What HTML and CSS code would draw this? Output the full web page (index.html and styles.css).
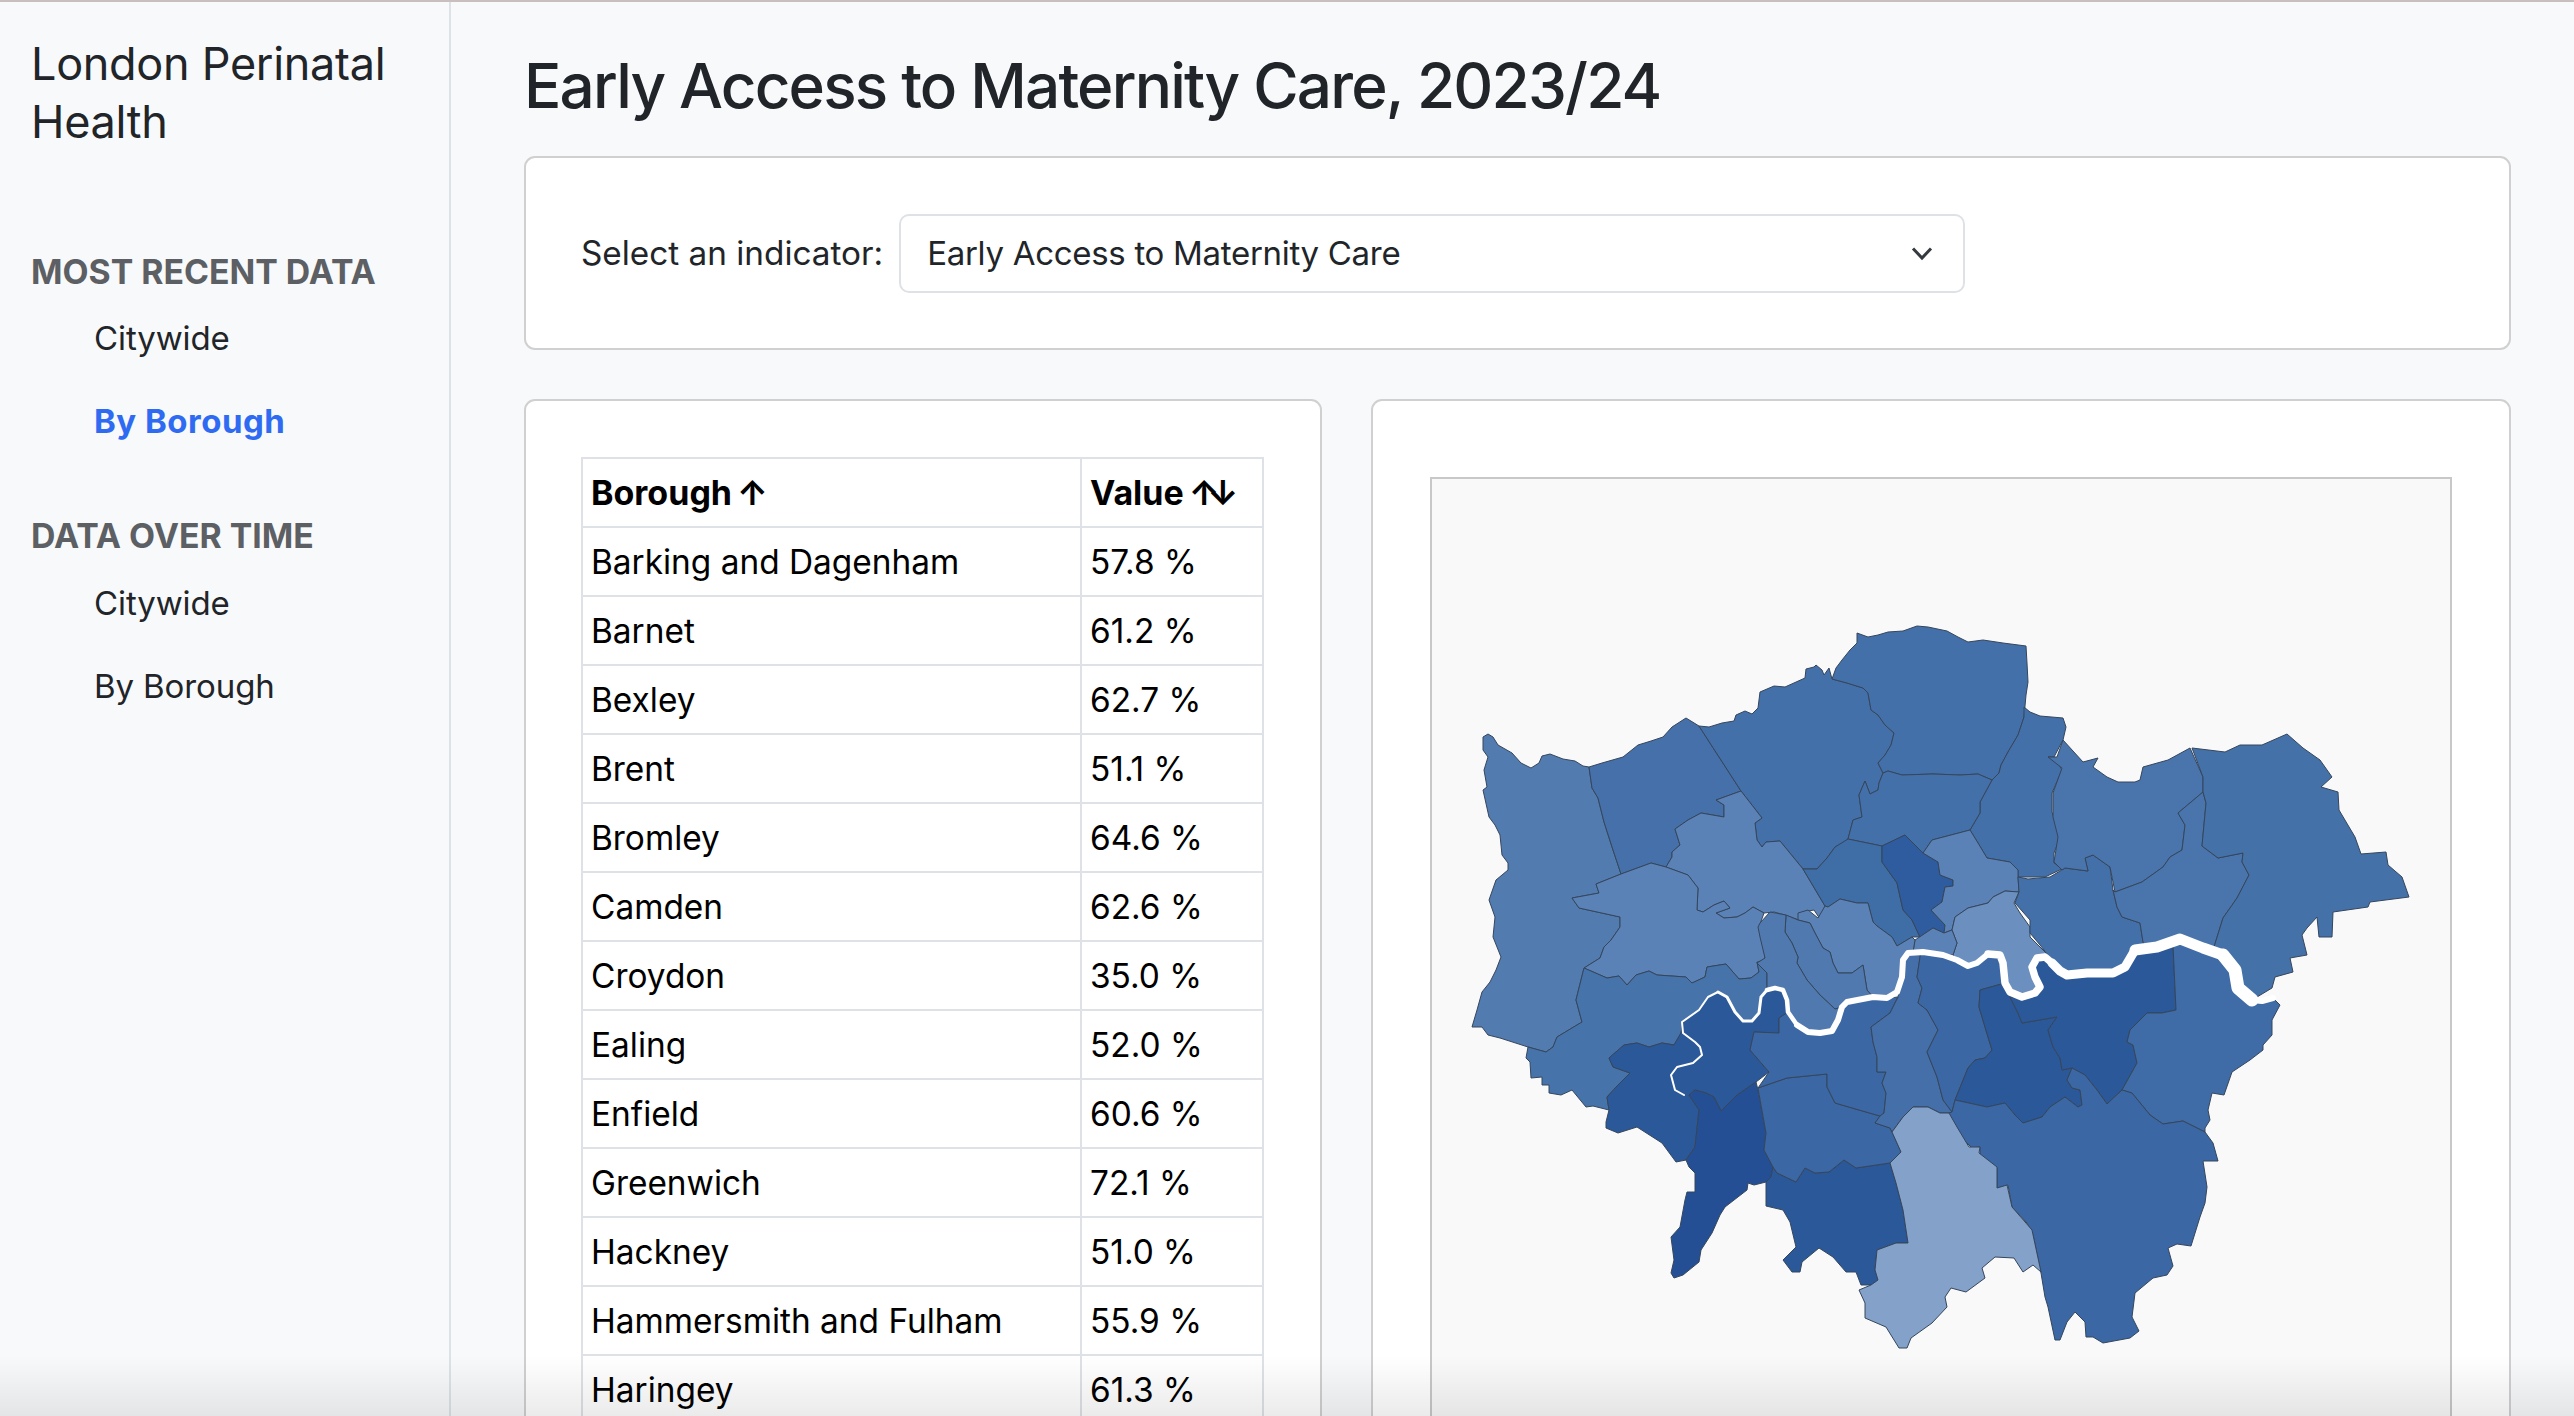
FILE: index.html
```html
<!DOCTYPE html>
<html lang="en">
<head>
<meta charset="utf-8">
<title>Early Access to Maternity Care</title>
<link rel="stylesheet" href="styles.css">
</head>
<body>
<div class="app">
<aside class="sidebar">
  <div class="brand">London Perinatal Health</div>
  <nav>
    <h3 class="nav-head">MOST RECENT DATA</h3>
    <a class="nav-link">Citywide</a>
    <a class="nav-link active">By Borough</a>
    <h3 class="nav-head second">DATA OVER TIME</h3>
    <a class="nav-link">Citywide</a>
    <a class="nav-link">By Borough</a>
  </nav>
</aside>
<main class="main">
  <h1 class="page-title">Early Access to Maternity Care, 2023/24</h1>
  <section class="card picker">
    <label class="picker-label">Select an indicator:</label>
    <div class="select">
      <span>Early Access to Maternity Care</span>
      <svg class="chevron" viewBox="0 0 24 24" width="24" height="24"><path d="M3 7.5 12 17 21 7.5" fill="none" stroke="#343a40" stroke-width="3"/></svg>
    </div>
  </section>
  <div class="columns">
    <section class="card table-card">
      <table class="data">
        <thead><tr><th>Borough <span class="arrow">↑</span></th><th>Value <span class="arrow">↑↓</span></th></tr></thead>
        <tbody>
          <tr><td>Barking and Dagenham</td><td>57.8 %</td></tr>
          <tr><td>Barnet</td><td>61.2 %</td></tr>
          <tr><td>Bexley</td><td>62.7 %</td></tr>
          <tr><td>Brent</td><td>51.1 %</td></tr>
          <tr><td>Bromley</td><td>64.6 %</td></tr>
          <tr><td>Camden</td><td>62.6 %</td></tr>
          <tr><td>Croydon</td><td>35.0 %</td></tr>
          <tr><td>Ealing</td><td>52.0 %</td></tr>
          <tr><td>Enfield</td><td>60.6 %</td></tr>
          <tr><td>Greenwich</td><td>72.1 %</td></tr>
          <tr><td>Hackney</td><td>51.0 %</td></tr>
          <tr><td>Hammersmith and Fulham</td><td>55.9 %</td></tr>
          <tr><td>Haringey</td><td>61.3 %</td></tr>
        </tbody>
      </table>
    </section>
    <section class="card map-card">
      <div class="map-box">
        <svg class="map" viewBox="1432 479 1017 960" width="1017" height="960">
          <g class="boroughs">
            <polygon class="c-hil" points="1483,737 1488,734 1493,737 1498,745 1512,753 1521,763 1531,768 1539,763 1542,756 1550,754 1563,759 1575,761 1583,766 1589,767 1592,788 1598,798 1604,822 1613,850 1621,874 1596,884 1599,893 1572,898 1579,908 1620,917 1620,927 1611,940 1604,947 1600,958 1584,968 1576,1000 1582,1022 1557,1037 1553,1047 1546,1052 1528,1047 1500,1038 1488,1035 1482,1027 1472,1027 1477,1010 1482,992 1490,982 1496,970 1501,957 1493,937 1495,917 1489,900 1496,880 1508,870 1508,863 1502,855 1500,835 1495,825 1489,817 1483,790 1487,787 1484,770 1488,757 1483,750"/>
            <polygon class="c-har" points="1589,767 1602,763 1623,757 1638,745 1651,741 1663,737 1672,727 1686,718 1699,726 1741,791 1716,800 1724,805 1724,817 1701,813 1688,820 1675,829 1680,845 1672,852 1672,857 1666,867 1651,863 1621,874 1613,850 1604,822 1598,798 1592,788"/>
            <polygon class="c-bar" points="1699,726 1709,727 1722,723 1734,721 1736,715 1745,711 1752,714 1758,708 1760,692 1774,686 1785,687 1805,678 1806,669 1814,667 1816,665 1822,670 1824,675 1829,668 1832,679 1847,683 1863,688 1868,693 1871,710 1878,715 1885,725 1894,733 1891,745 1885,755 1878,763 1883,773 1879,783 1878,790 1870,794 1865,781 1859,795 1862,817 1853,820 1848,839 1843,843 1835,847 1827,858 1817,869 1803,869 1780,841 1766,842 1762,847 1757,840 1755,823 1762,818 1741,791"/>
            <polygon class="c-bar" points="1832,679 1836,668 1842,660 1850,650 1857,643 1857,633 1868,637 1878,635 1888,632 1903,631 1917,626 1928,627 1947,631 1958,637 1968,642 1983,640 2003,643 2026,646 2027,663 2028,682 2026,695 2024,717 2018,735 2008,752 2001,765 1999,773 1992,780 1978,774 1960,775 1933,774 1902,775 1888,771 1883,773 1878,763 1885,755 1891,745 1894,733 1885,725 1878,715 1871,710 1868,693 1863,688 1847,683"/>
            <polygon class="c-bar" points="2024,707 2030,712 2040,716 2063,718 2066,727 2063,740 2054,757 2048,757 2058,763 2062,770 2052,793 2052,812 2057,828 2059,840 2054,853 2054,863 2062,869 2045,877 2018,877 2018,870 2010,862 1987,858 1978,843 1970,830 1980,813 1980,802 1992,780 1999,773 2001,765 2008,752 2018,735 2024,717"/>
            <polygon class="c-bar" points="1883,773 1888,771 1902,775 1933,774 1960,775 1978,774 1992,780 1980,802 1980,813 1970,830 1932,840 1923,853 1905,835 1882,846 1848,839 1853,820 1862,817 1859,795 1865,781 1870,794 1878,790 1879,783"/>
            <polygon class="c-bre" points="1741,791 1762,818 1755,823 1757,840 1762,847 1766,842 1780,841 1803,869 1825,906 1820,919 1814,910 1803,912 1799,915 1799,920 1785,915 1774,912 1764,913 1753,907 1745,913 1737,917 1724,918 1716,913 1730,908 1724,901 1714,905 1703,912 1697,910 1698,888 1688,875 1666,867 1672,857 1672,852 1680,845 1675,829 1688,820 1701,813 1724,817 1724,805 1716,800"/>
            <polygon class="c-bre" points="1621,874 1651,863 1666,867 1688,875 1698,888 1697,910 1703,912 1714,905 1724,901 1730,908 1716,913 1724,918 1737,917 1745,913 1753,907 1764,913 1759,927 1764,947 1765,960 1757,962 1759,972 1751,978 1739,979 1726,964 1707,967 1705,977 1692,983 1686,977 1657,975 1649,971 1636,975 1627,985 1619,976 1607,978 1584,968 1600,958 1604,947 1611,940 1620,927 1620,917 1579,908 1572,898 1599,893 1596,884"/>
            <polygon class="c-hou" points="1584,968 1607,978 1619,976 1627,985 1636,975 1649,971 1657,975 1686,977 1692,983 1705,977 1707,967 1726,964 1739,979 1751,978 1759,972 1757,962 1767,973 1767,990 1761,997 1759,1013 1752,1021 1743,1021 1735,1012 1727,997 1718,992 1708,997 1699,1010 1683,1022 1681,1033 1674,1045 1662,1043 1649,1047 1637,1043 1624,1045 1609,1058 1613,1067 1630,1073 1618,1085 1607,1097 1609,1110 1593,1106 1586,1107 1572,1090 1561,1095 1549,1093 1549,1085 1542,1085 1542,1077 1531,1078 1530,1062 1526,1058 1528,1047 1546,1052 1553,1047 1557,1037 1582,1022 1576,1000"/>
            <polygon class="c-ric" points="1683,1022 1699,1010 1708,997 1718,992 1727,997 1735,1012 1743,1021 1752,1021 1759,1013 1761,997 1767,990 1775,988 1783,990 1787,1000 1789,1018 1779,1018 1779,1033 1754,1032 1750,1050 1769,1072 1756,1082 1737,1095 1721,1111 1714,1097 1706,1093 1695,1090 1689,1095 1699,1110 1695,1147 1686,1160 1676,1162 1662,1143 1637,1127 1618,1133 1606,1128 1606,1122 1609,1110 1607,1097 1618,1085 1630,1073 1613,1067 1609,1058 1624,1045 1637,1043 1649,1047 1662,1043 1674,1045 1681,1033"/>
            <polygon class="c-kin" points="1689,1095 1695,1090 1706,1093 1714,1097 1721,1111 1737,1095 1756,1082 1758,1090 1766,1133 1764,1150 1773,1167 1771,1177 1766,1182 1754,1185 1748,1183 1747,1190 1725,1207 1720,1215 1712,1233 1701,1250 1699,1262 1683,1275 1674,1278 1671,1273 1674,1260 1671,1237 1680,1227 1685,1200 1687,1192 1695,1192 1695,1173 1689,1167 1686,1160 1695,1147 1699,1110"/>
            <polygon class="c-ric" points="1773,1167 1777,1173 1796,1182 1805,1168 1815,1173 1829,1172 1844,1160 1856,1168 1890,1163 1896,1183 1903,1210 1908,1243 1896,1243 1877,1250 1875,1270 1878,1280 1871,1285 1861,1285 1856,1272 1846,1272 1833,1257 1819,1248 1802,1262 1800,1272 1792,1272 1783,1260 1796,1247 1790,1222 1783,1210 1766,1206 1766,1182 1771,1177"/>
            <polygon class="c-wan" points="1758,1088 1787,1078 1827,1074 1827,1087 1835,1103 1859,1110 1880,1116 1875,1123 1890,1128 1892,1132 1901,1152 1890,1163 1856,1168 1844,1160 1829,1172 1815,1173 1805,1168 1796,1182 1777,1173 1773,1167 1764,1150 1766,1133"/>
            <polygon class="c-wan" points="1779,1033 1779,1018 1788,1012 1797,1025 1808,1032 1820,1033 1832,1031 1838,1020 1842,1007 1847,1002 1873,997 1887,998 1898,997 1890,1013 1871,1027 1873,1042 1877,1057 1877,1072 1886,1072 1882,1083 1886,1093 1884,1113 1880,1116 1859,1110 1835,1103 1827,1087 1827,1074 1787,1078 1758,1088 1769,1072 1750,1050 1754,1032"/>
            <polygon class="c-lam" points="1898,997 1902,977 1903,960 1908,953 1921,952 1920,957 1917,977 1922,988 1918,1003 1927,1010 1938,1030 1927,1052 1937,1077 1943,1100 1952,1112 1949,1113 1940,1113 1928,1107 1913,1107 1903,1117 1892,1132 1890,1128 1875,1123 1880,1116 1884,1113 1886,1093 1882,1083 1886,1072 1877,1072 1877,1057 1873,1042 1871,1027 1890,1013"/>
            <polygon class="c-wan" points="1921,952 1943,955 1957,960 1968,966 1977,963 1988,954 2000,955 2003,963 2005,983 1980,990 1979,1007 1988,1037 1992,1050 1985,1058 1975,1060 1968,1068 1955,1100 1952,1112 1943,1100 1937,1077 1927,1052 1938,1030 1927,1010 1918,1003 1922,988 1917,977 1920,957"/>
            <polygon class="c-ric" points="1980,990 2005,983 2010,992 2022,997 2010,997 2018,1013 2022,1023 2057,1017 2048,1030 2053,1047 2060,1058 2062,1070 2072,1068 2067,1080 2072,1088 2080,1090 2082,1105 2078,1107 2065,1097 2050,1107 2042,1117 2023,1123 2015,1115 2005,1103 1987,1107 1955,1100 1968,1068 1975,1060 1985,1058 1992,1050 1988,1037 1979,1007"/>
            <polygon class="c-ric" points="2022,997 2035,993 2040,987 2035,977 2032,967 2037,958 2045,957 2052,963 2060,973 2067,975 2087,973 2113,973 2125,967 2135,950 2157,947 2173,945 2176,1010 2162,1013 2147,1013 2130,1030 2127,1042 2133,1045 2137,1063 2132,1072 2122,1090 2107,1104 2097,1090 2085,1075 2072,1068 2062,1070 2060,1058 2053,1047 2048,1030 2057,1017 2022,1023 2018,1013 2010,997"/>
            <polygon class="c-bex" points="2173,945 2180,939 2203,948 2223,955 2235,970 2238,988 2252,1000 2273,998 2280,1005 2272,1020 2272,1035 2263,1045 2263,1050 2250,1060 2232,1072 2224,1095 2212,1093 2208,1110 2210,1120 2205,1128 2205,1132 2183,1121 2163,1124 2150,1115 2132,1093 2122,1090 2132,1072 2137,1063 2133,1045 2127,1042 2130,1030 2147,1013 2162,1013 2176,1010"/>
            <polygon class="c-bro" points="2122,1090 2132,1093 2150,1115 2163,1124 2183,1121 2205,1132 2213,1143 2218,1161 2203,1161 2207,1187 2205,1203 2200,1217 2191,1246 2177,1244 2168,1248 2173,1266 2167,1275 2153,1278 2135,1293 2132,1317 2139,1331 2130,1338 2103,1343 2093,1337 2086,1337 2085,1322 2075,1312 2067,1322 2060,1340 2055,1340 2048,1307 2045,1297 2041,1273 2033,1235 2027,1223 2012,1207 2008,1185 1997,1188 1997,1168 1980,1157 1980,1147 1972,1148 1957,1133 1949,1113 1952,1112 1955,1100 1987,1107 2005,1103 2015,1115 2023,1123 2042,1117 2050,1107 2065,1097 2078,1107 2082,1105 2080,1090 2072,1088 2067,1080 2072,1068 2085,1075 2097,1090 2107,1104"/>
            <polygon class="c-cro" points="1892,1132 1903,1117 1913,1107 1928,1107 1940,1113 1949,1113 1957,1127 1969,1147 1980,1147 1979,1153 1997,1167 1997,1188 2007,1185 2012,1207 2032,1230 2041,1272 2033,1265 2023,1272 2014,1258 1995,1257 1982,1268 1985,1278 1966,1292 1951,1288 1945,1297 1947,1307 1932,1323 1911,1338 1907,1348 1899,1348 1886,1327 1865,1318 1865,1303 1859,1290 1871,1285 1878,1280 1875,1270 1877,1250 1896,1243 1908,1243 1903,1210 1896,1183 1890,1163 1901,1152"/>
            <polygon class="c-cam" points="1803,869 1817,869 1827,858 1835,847 1848,839 1882,846 1882,862 1897,883 1903,910 1912,920 1920,937 1912,937 1897,946 1892,937 1877,926 1873,922 1868,903 1857,903 1840,899 1828,907 1825,906"/>
            <polygon class="c-isl" points="1882,846 1905,835 1923,853 1938,862 1940,875 1953,880 1953,886 1945,887 1942,902 1931,910 1945,925 1944,933 1933,928 1920,937 1912,920 1903,910 1897,883 1882,862"/>
            <polygon class="c-bre" points="1923,853 1932,840 1970,830 1978,843 1987,858 2010,862 2018,870 2018,877 2019,892 2005,891 1993,897 1988,903 1968,908 1955,917 1952,930 1944,933 1945,925 1931,910 1942,902 1945,887 1953,886 1953,880 1940,875 1938,862"/>
            <polygon class="c-tow" points="1955,917 1968,908 1988,903 1993,897 2005,891 2019,892 2014,903 2020,913 2030,927 2030,937 2038,945 2048,955 2045,957 2037,958 2032,967 2035,977 2040,987 2035,993 2022,997 2010,992 2005,983 2003,963 2000,955 1988,954 1977,963 1968,966 1957,960 1953,955 1957,943 1952,930"/>
            <polygon class="c-bre" points="1913,952 1915,940 1933,928 1944,933 1952,930 1957,943 1953,955 1943,955 1921,952"/>
            <polygon class="c-bre" points="1828,907 1840,899 1857,903 1868,903 1873,922 1877,926 1892,937 1897,946 1912,937 1915,940 1913,952 1908,953 1903,960 1902,977 1897,992 1887,998 1873,997 1867,990 1863,965 1852,973 1838,973 1833,963 1830,952 1823,948 1815,933 1810,923 1798,920 1798,913 1808,910 1818,918 1825,906"/>
            <polygon class="c-ken" points="1786,915 1798,920 1810,923 1815,933 1823,948 1830,952 1833,963 1838,973 1852,973 1863,965 1867,990 1873,997 1847,1002 1842,1007 1835,1009 1820,995 1807,980 1797,963 1798,957 1792,943 1785,932"/>
            <polygon class="c-ken" points="1760,923 1770,912 1786,915 1785,932 1792,943 1798,957 1797,963 1807,980 1820,995 1835,1009 1842,1007 1838,1020 1832,1031 1820,1033 1808,1032 1797,1025 1788,1012 1787,1000 1783,990 1775,988 1767,990 1767,973 1757,963 1765,958 1760,937 1758,927"/>
            <polygon class="c-bar" points="2018,877 2028,879 2050,877 2065,868 2088,871 2085,858 2093,855 2110,867 2113,890 2117,907 2122,917 2140,923 2143,942 2145,947 2135,950 2125,967 2113,973 2087,973 2067,975 2055,970 2045,957 2048,955 2040,945 2030,933 2030,920 2015,903 2019,892"/>
            <polygon class="c-red" points="2190,748 2168,760 2143,767 2140,780 2135,782 2118,782 2107,777 2093,767 2098,758 2083,762 2063,740 2057,757 2048,757 2062,768 2053,793 2053,817 2058,837 2054,862 2062,870 2065,868 2088,871 2085,858 2093,855 2110,867 2115,892 2142,882 2163,867 2170,857 2182,850 2185,825 2178,813 2203,792 2203,777"/>
            <polygon class="c-red" points="2203,792 2206,803 2202,846 2218,858 2243,853 2242,862 2249,875 2237,898 2223,918 2214,947 2203,948 2180,939 2157,947 2145,947 2143,942 2140,923 2122,917 2117,907 2113,890 2115,892 2142,882 2163,867 2170,857 2182,850 2185,825 2178,813"/>
            <polygon class="c-hav" points="2192,748 2225,752 2240,745 2262,745 2287,734 2303,748 2320,760 2332,777 2321,787 2338,792 2339,810 2355,837 2361,854 2386,852 2388,865 2402,877 2409,897 2370,902 2368,907 2333,912 2332,937 2319,937 2317,917 2307,928 2302,935 2307,955 2290,958 2293,972 2275,977 2272,988 2252,1000 2238,988 2235,970 2223,955 2214,947 2223,918 2237,898 2249,875 2242,862 2243,853 2218,858 2202,846 2206,803 2203,792 2203,777"/>
          </g>
          <g class="thames">
            <polyline class="r1" points="1684,1095 1675,1090 1671,1075 1677,1067 1693,1063 1702,1055 1700,1047 1695,1042 1683,1033 1682,1022 1699,1010 1708,997 1718,992"/>
            <polyline class="r2" points="1718,992 1727,997 1735,1012 1743,1021 1752,1021 1759,1013 1761,997 1767,990"/>
            <polyline class="r3" points="1767,990 1775,988 1783,990 1787,1000 1788,1012 1797,1025"/>
            <polyline class="r4" points="1797,1025 1808,1032 1820,1033 1832,1031 1838,1020 1842,1007 1847,1002 1873,997 1887,998 1897,992 1902,977 1903,960 1908,953 1923,952 1943,955 1957,960 1968,966 1977,963 1988,954"/>
            <polyline class="r5" points="1988,954 2000,955 2003,963 2005,983 2010,992 2022,997 2035,993 2040,987 2035,977 2032,967 2037,958 2045,957 2052,963"/>
            <polyline class="r6" points="2052,963 2060,971 2067,975 2087,973 2113,973 2125,967 2135,950"/>
            <polyline class="r7" points="2135,950 2157,947 2180,939 2203,948 2223,955"/>
            <polyline class="r8" points="2223,955 2235,970 2238,988 2252,1000"/>
            <polyline class="r4" points="2252,1000 2262,1001 2273,998"/>
          </g>
        </svg>
      </div>
    </section>
  </div>
</main>
</div>
<div class="bottom-fade"></div>
</body>
</html>
```
FILE: styles.css
```css
* { box-sizing: border-box; }
html, body { margin: 0; height: 100%; overflow: hidden; }
body {
  font-family: Inter, "Liberation Sans", sans-serif;
  color: #212529;
  background: #f8f9fa;
  border-top: 2px solid #cabfbf;
}
.app { display: flex; height: 1414px; overflow: hidden; }
.sidebar {
  flex: 0 0 451px;
  border-right: 2px solid #dee2e6;
  padding: 33px 31px 0;
}
.brand { font-size: 45px; line-height: 58px; margin-bottom: 99px; letter-spacing: -0.3px; }
.nav-head {
  margin: 0;
  font-size: 33.8px;
  line-height: 44px;
  font-weight: 700;
  color: #5c5f63;
}
.nav-head.second { margin-top: 71px; }
.nav-link {
  display: block;
  padding-left: 63px;
  font-size: 33px;
  line-height: 44px;
  margin: 0 0 39px;
  letter-spacing: -0.1px;
}
.nav-head + .nav-link { margin-top: 22px; }
.nav-head.second + .nav-link { margin-top: 23px; }
.nav-link.active { color: #2f6bf2; font-weight: 700; letter-spacing: 0.5px; }
.nav-link:last-child { margin-bottom: 0; }
.main { flex: 1; padding: 44px 63px 0 73px; min-width: 0; }
.page-title {
  margin: 0 0 30px;
  font-size: 62px;
  line-height: 80px;
  font-weight: 500;
  letter-spacing: -1.8px;
}
.card { background: #fff; border: 2px solid #d0d0d0; border-radius: 11px; }
.picker {
  display: flex;
  align-items: center;
  gap: 16px;
  padding: 55px;
  height: 194px;
}
.picker-label { font-size: 33.3px; color: #212529; }
.select {
  position: relative;
  display: flex;
  align-items: center;
  width: 1066px;
  height: 79px;
  padding: 0 26px;
  border: 2px solid #dee2e6;
  border-radius: 10px;
  font-size: 33px;
  letter-spacing: -0.3px;
}
.chevron { position: absolute; right: 29px; top: 25px; }
.columns {
  display: grid;
  grid-template-columns: 7fr 10fr;
  gap: 49px;
  margin-top: 49px;
  align-items: start;
}
.table-card { padding: 56px 56px 56px 55px; }
.data { border-collapse: collapse; width: 100%; color: #000; font-size: 33.4px; }
.data th, .data td {
  border: 2px solid #dee2e6;
  height: 69px;
  padding: 0 8px;
  text-align: left;
  line-height: 44px;
}
.data th { font-weight: 700; font-size: 34px; }
.data th:first-child, .data td:first-child { width: 499px; }
.arrow { letter-spacing: -12px; margin-left: -3px; }
.map-card { padding: 76px 57px 0; height: 1100px; }
.map-box {
  background: #f9f9f9;
  border: 2px solid #c8c8c8;
  height: 1000px;
}
.map { display: block; }
.boroughs polygon { stroke: #35465c; stroke-width: 1; stroke-linejoin: round; }
.thames polyline { fill: none; stroke: #fff; stroke-linejoin: round; stroke-linecap: round; }
.r1 { stroke-width: 2; }
.r2 { stroke-width: 3; }
.r3 { stroke-width: 4.5; }
.r4 { stroke-width: 6; }
.r5 { stroke-width: 7.5; }
.r6 { stroke-width: 9; }
.r7 { stroke-width: 11; }
.r8 { stroke-width: 13; }
.c-hil { fill: #527bb0; }
.c-har { fill: #4570a9; }
.c-bar { fill: #4470a9; }
.c-bre { fill: #5b82b6; }
.c-hou { fill: #4773ab; }
.c-ric { fill: #2b5899; }
.c-kin { fill: #244f94; }
.c-wan { fill: #3b67a4; }
.c-lam { fill: #456fa8; }
.c-bex { fill: #3f6ca6; }
.c-bro { fill: #3b67a4; }
.c-cro { fill: #83a1c9; }
.c-cam { fill: #3f6da6; }
.c-isl { fill: #2e5c9f; }
.c-tow { fill: #6b8fbe; }
.c-ken { fill: #4f79af; }
.c-red { fill: #4a75ac; }
.c-hav { fill: #4571a9; }
.bottom-fade {
  position: fixed;
  left: 0;
  right: 0;
  bottom: 0;
  height: 60px;
  pointer-events: none;
  background: linear-gradient(to bottom, rgba(0, 0, 0, 0), rgba(0, 0, 0, 0.08));
}
```
